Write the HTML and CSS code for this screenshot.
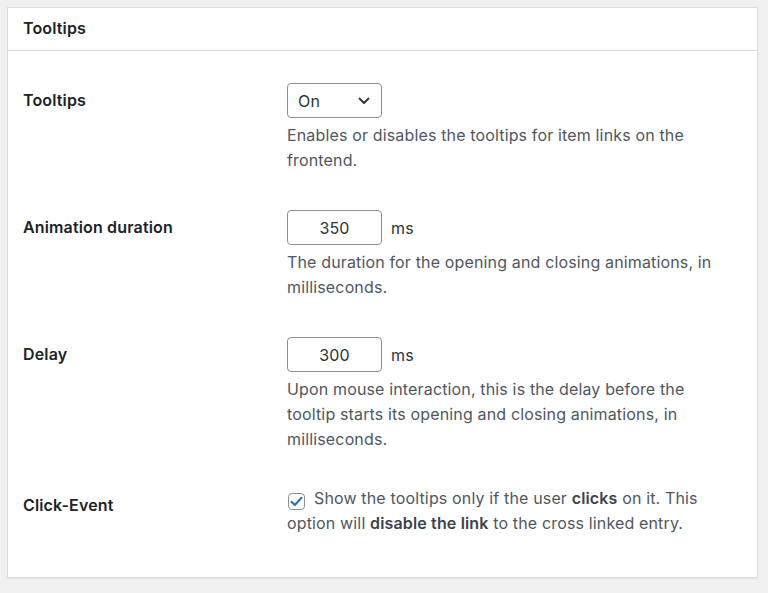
FILE: index.html
```html
<!DOCTYPE html>
<html lang="en">
<head>
<meta charset="utf-8">
<title>Tooltips settings</title>
<link rel="stylesheet" href="styles.css">
</head>
<body>
<div class="panel">
  <div class="panel-head"><h2>Tooltips</h2></div>
  <div class="panel-body">
    <div class="row">
      <div class="label">Tooltips</div>
      <div class="field">
        <div class="select"><span>On</span>
          <svg class="chev" width="12" height="8" viewBox="0 0 12 8"><path d="M1.5 1.5 L6 6 L10.5 1.5" fill="none" stroke="#2c3338" stroke-width="1.8" stroke-linecap="round" stroke-linejoin="round"/></svg>
        </div>
        <p class="desc">Enables or disables the tooltips for item links on the frontend.</p>
      </div>
    </div>
    <div class="row">
      <div class="label">Animation duration</div>
      <div class="field">
        <div class="inline"><div class="number">350</div><span class="unit">ms</span></div>
        <p class="desc">The duration for the opening and closing animations, in milliseconds.</p>
      </div>
    </div>
    <div class="row">
      <div class="label">Delay</div>
      <div class="field">
        <div class="inline"><div class="number">300</div><span class="unit">ms</span></div>
        <p class="desc">Upon mouse interaction, this is the delay before the tooltip starts its opening and closing animations, in milliseconds.</p>
      </div>
    </div>
    <div class="row row-check">
      <div class="label">Click-Event</div>
      <div class="field">
        <p class="desc check-text"><span class="checkbox"><svg width="13" height="11" viewBox="0 0 13 11"><path d="M1.5 5.8 L4.8 9 L11.5 1.8" fill="none" stroke="#2271b1" stroke-width="2" stroke-linecap="round" stroke-linejoin="round"/></svg></span>Show the tooltips only if the user <b>clicks</b> on it. This option will <b>disable the link</b> to the cross linked entry.</p>
      </div>
    </div>
  </div>
</div>
</body>
</html>
```
FILE: styles.css
```css
* { box-sizing: border-box; }
html, body { margin: 0; }
body {
  background: #f0f0f1;
  padding: 7px 10px 15px 7px;
  font-family: Inter, "Liberation Sans", Arial, sans-serif;
  font-size: 16px;
  letter-spacing: 0.15px;
  color: #1d2327;
}
.panel {
  background: #fff;
  border: 1px solid #dcdcde;
  box-shadow: 0 1px 1px rgba(0,0,0,0.04);
  height: 571px;
}
.panel-head {
  height: 43px;
  border-bottom: 1px solid #dcdcde;
  padding: 0 15px 2px;
  display: flex;
  align-items: center;
}
.panel-head h2 {
  margin: 0;
  font-size: 16px;
  font-weight: 600;
  color: #1d2327;
}
.panel-body { padding: 14px 15px 0 15px; }
.row {
  display: grid;
  grid-template-columns: 264px 1fr;
  padding: 18px 0 19px;
}
.label {
  font-weight: 600;
  line-height: 35px;
  color: #1d2327;
}
.field { width: 440px; }
.select {
  width: 95px;
  height: 35px;
  border: 1px solid #8c8f94;
  border-radius: 4px;
  display: flex;
  align-items: center;
  justify-content: space-between;
  padding: 0 11px 0 10px;
  color: #2c3338;
}
.inline { display: flex; align-items: center; gap: 9px; }
.number {
  width: 95px;
  height: 35px;
  border: 1px solid #8c8f94;
  border-radius: 4px;
  display: flex;
  align-items: center;
  justify-content: center;
  color: #2c3338;
}
.unit { color: #2c3338; }
.desc {
  margin: 5px 0 0;
  line-height: 25px;
  color: #50575e;
}
.desc b { color: #3c434a; font-weight: 600; }
.row-check { padding-top: 15px; }
.row-check .label { line-height: 25px; padding-top: 7px; }
.check-text { margin: 0; }
.checkbox {
  display: inline-flex;
  align-items: center;
  justify-content: center;
  width: 17px;
  height: 17px;
  border: 1px solid #8c8f94;
  border-radius: 4px;
  vertical-align: -3px;
  margin: 0 9px 0 1px;
}
```
